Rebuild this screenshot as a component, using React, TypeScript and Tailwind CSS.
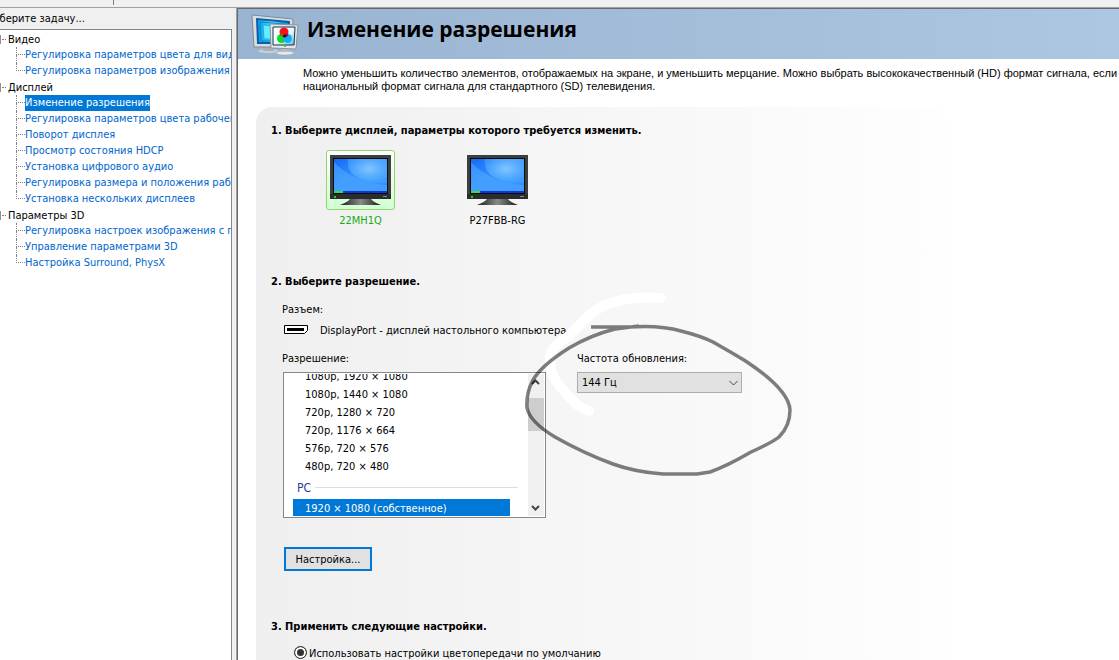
import React, { useState } from 'react';
import clsx from 'clsx';

const treeGroups = [
  {
    title: 'Видео',
    items: ['Регулировка параметров цвета для видео', 'Регулировка параметров изображения для видео'],
  },
  {
    title: 'Дисплей',
    items: [
      'Изменение разрешения',
      'Регулировка параметров цвета рабочего стола',
      'Поворот дисплея',
      'Просмотр состояния HDCP',
      'Установка цифрового аудио',
      'Регулировка размера и положения рабочего стола',
      'Установка нескольких дисплеев',
    ],
  },
  {
    title: 'Параметры 3D',
    items: [
      'Регулировка настроек изображения с просмотром',
      'Управление параметрами 3D',
      'Настройка Surround, PhysX',
    ],
  },
];

const displays = ['22MH1Q', 'P27FBB-RG'];

const hdModes = [
  '1080p, 1920 × 1080',
  '1080p, 1440 × 1080',
  '720p, 1280 × 720',
  '720p, 1176 × 664',
  '576p, 720 × 576',
  '480p, 720 × 480',
];

const pcModes = ['1920 × 1080 (собственное)'];

const HeaderIcon: React.FC = () => (
  <svg width="48" height="42" viewBox="0 0 48 42" aria-hidden="true">
    <defs>
      <linearGradient id="backScreen" x1="0" y1="0" x2="1" y2="0">
        <stop offset="0" stopColor="#0a9be8" />
        <stop offset="0.5" stopColor="#4fe9fb" />
        <stop offset="1" stopColor="#1289dc" />
      </linearGradient>
      <linearGradient id="frontScreen" x1="0" y1="0" x2="1" y2="1">
        <stop offset="0" stopColor="#ffffff" />
        <stop offset="0.55" stopColor="#e3f8ff" />
        <stop offset="1" stopColor="#4cc0ee" />
      </linearGradient>
    </defs>
    <ellipse cx="17" cy="37" rx="10" ry="2" fill="#c9ced3" />
    <path d="M13 32h9l1 5H12z" fill="#a9b0b8" />
    <path d="M1 1 42 5 41 33 3 33z" fill="#d9dde0" stroke="#7f8b97" strokeWidth="1" />
    <path d="M5 4 39 7 38 30 6 30z" fill="#0b5fa8" />
    <path d="M7 6 37 9v19H8z" fill="url(#backScreen)" />
    <path d="M9 8 33 10v17H10z" fill="none" stroke="#0d7fd2" strokeWidth="1" />
    <path d="M12 11 31 12v13H13z" fill="#5fefff" stroke="#20a8ee" strokeWidth="1" />
    <ellipse cx="34" cy="39" rx="9" ry="2" fill="#e6e9eb" stroke="#98a0a8" strokeWidth="0.5" />
    <path d="M31 33h7l1 5h-9z" fill="#b6bcc2" />
    <path d="M19 10 47 11 45 35 20 34z" fill="#e4e7e9" stroke="#8a939c" strokeWidth="1" />
    <path d="M22 13 44 13 43 31 22 31z" fill="url(#frontScreen)" stroke="#18344c" strokeWidth="1" />
    <circle cx="33" cy="18" r="4.5" fill="#fb1018" />
    <circle cx="30.5" cy="24.5" r="4.5" fill="#0fdc1c" />
    <circle cx="36.5" cy="24.5" r="4.5" fill="#17aef2" />
    <path d="M29 20q4-1 5 2l-1 1q-4 0-4-3z" fill="#8a6a08" />
    <path d="M37 20q-4-1-4 2l1 1q4 0 3-3z" fill="#8b1070" />
    <circle cx="33.5" cy="22" r="1.5" fill="#111111" />
    <rect x="33" y="32" width="2" height="1" fill="#22dd22" />
  </svg>
);

const MonitorIcon: React.FC = () => (
  <svg width="61" height="51" viewBox="0 0 61 51" aria-hidden="true">
    <defs>
      <linearGradient id="screen" x1="0" y1="0" x2="1" y2="1">
        <stop offset="0" stopColor="#1668f5" />
        <stop offset="0.4" stopColor="#2f90ff" />
        <stop offset="1" stopColor="#2a8cff" />
      </linearGradient>
      <radialGradient id="glow" cx="0.55" cy="0.4" r="0.6">
        <stop offset="0" stopColor="#86caff" stopOpacity="0.95" />
        <stop offset="1" stopColor="#52abff" stopOpacity="0.5" />
      </radialGradient>
      <linearGradient id="stand" x1="0" y1="0" x2="1" y2="0">
        <stop offset="0" stopColor="#1a1a1a" />
        <stop offset="0.5" stopColor="#8a8a8a" />
        <stop offset="1" stopColor="#1a1a1a" />
      </linearGradient>
    </defs>
    <path d="M20 44h21q2 3 10 6H10q8-3 10-6z" fill="url(#stand)" />
    <rect width="61" height="44" fill="#3c3f3f" />
    <rect x="3" y="3" width="55" height="36" fill="#0b0c0e" />
    <rect x="4" y="4" width="53" height="34" fill="url(#screen)" />
    <path d="M4 7q18 20 53 23v6H4z" fill="#58aeff" fillOpacity="0.5" />
    <path d="M18 4h39v24q-14 2-29-5Q16 16 18 4z" fill="url(#glow)" />
    <rect x="4" y="36" width="53" height="2" fill="#0f35dc" />
    <rect x="4" y="36" width="9" height="2" fill="#3fe03a" />
    <rect y="39" width="61" height="5" fill="#2b2d2d" />
    <rect x="4" y="41" width="2" height="2" fill="#18d424" />
    <rect x="53" y="41" width="4" height="1" fill="#8a8a8a" />
  </svg>
);

const PortIcon: React.FC = () => (
  <svg width="24" height="9" viewBox="0 0 24 9" className="mt-[2px]" aria-hidden="true">
    <path d="M0.5 0.5h23v5l-3 3H0.5z" fill="#ffffff" stroke="#000000" />
    <rect x="3" y="3" width="17" height="3" fill="#000000" />
  </svg>
);

const Chevron: React.FC<{ up?: boolean; bold?: boolean }> = ({ up, bold }) => (
  <svg width="9" height="6" viewBox="0 0 9 6" aria-hidden="true">
    <path
      d={bold ? (up ? 'M1 5 4.5 1.5 8 5' : 'M1 1 4.5 4.5 8 1') : 'M0.5 1 4.5 5l4-4'}
      fill="none"
      stroke="#444444"
      strokeWidth={bold ? 2 : 1}
    />
  </svg>
);

// Hand-drawn marker around the refresh rate
const Marker: React.FC = () => (
  <svg
    width="270"
    height="190"
    viewBox="0 0 270 190"
    className="pointer-events-none absolute top-[183px] left-[267px]"
    aria-hidden="true"
  >
    <path
      d="M138 8C126 7 104 7 85 14S58 35 48 44S26 56 27 71S32 91 42 102S56 118 66 121"
      fill="none"
      stroke="#ffffff"
      strokeWidth="10"
      strokeLinecap="round"
    />
    <path
      d="M68 37H106C134 35 148 38 158 41C170 44 182 48 190 52Q218 68 224 72Q266 100 267 120Q267 136 256 147Q250 152 228 162Q204 176 187 182L174 184H140Q112 182 90 174Q60 163 32 147Q7 132 4 118Q3 104 9 92Q16 77 46 58Q68 45 92 39L116 36"
      fill="none"
      stroke="#000000"
      strokeOpacity="0.5"
      strokeWidth="3.5"
    />
  </svg>
);

const TaskTree: React.FC<{ active: string; onSelect: (name: string) => void }> = ({ active, onSelect }) => (
  <nav className="mr-1 -mb-1 flex-1 overflow-hidden border border-[#828790] bg-white pt-px">
    {treeGroups.map((group) => (
      <div key={group.title}>
        <div className="flex h-4 items-center">
          <span className="ml-[7px] h-[9px] w-[9px] border border-[#919191] bg-white" />
          <span className="mr-[2px] ml-px w-1 border-t border-dotted border-[#808080]" />
          <span className="pt-[2px]">{group.title}</span>
        </div>
        <ul>
          {group.items.map((item, i) => (
            <li key={item} className="flex h-4 pl-[31px]">
              <span className="flex w-[9px] shrink-0 flex-col">
                <span className="h-2 border-b border-l border-dotted border-[#808080]" />
                {i < group.items.length - 1 && (
                  <span className="h-2 border-l border-dotted border-[#808080]" />
                )}
              </span>
              <a
                href="#"
                onClick={() => onSelect(item)}
                className={clsx(
                  'whitespace-nowrap',
                  item === active ? 'bg-[#0078d7] text-white' : 'text-[#0066cc]'
                )}
              >
                {item}
              </a>
            </li>
          ))}
        </ul>
      </div>
    ))}
  </nav>
);

const ResolutionList: React.FC = () => {
  const [selected, setSelected] = useState(pcModes[0]);

  return (
    <div className="mt-[5px] ml-px flex h-[146px] w-[263px] border border-[#828790] bg-white p-px">
      <div
        role="listbox"
        aria-labelledby="resolution-label"
        className="flex flex-1 flex-col justify-end overflow-hidden pr-[18px] pl-2"
      >
        {hdModes.map((mode) => (
          <div
            key={mode}
            role="option"
            aria-selected={mode === selected}
            onClick={() => setSelected(mode)}
            className="h-[18px] shrink-0 pl-3 leading-5"
          >
            {mode}
          </div>
        ))}
        <div className="flex h-6 shrink-0 items-center gap-1 pt-px pl-1 text-[12px] text-[#1f3a9e]">
          PC
          <span className="-mr-2 flex-1 border-t border-[#d5dfe8]" />
        </div>
        {pcModes.map((mode) => (
          <div
            key={mode}
            role="option"
            aria-selected={mode === selected}
            onClick={() => setSelected(mode)}
            className={clsx(
              'h-[17px] shrink-0 pl-3 leading-5',
              mode === selected && 'bg-[#0078d7] text-white'
            )}
          >
            {mode}
          </div>
        ))}
      </div>
      <div className="flex w-4 flex-col bg-[#f0f0f0]">
        <button type="button" aria-label="Вверх" className="flex h-6 items-center justify-center pr-px pb-2">
          <Chevron up bold />
        </button>
        <div className="h-[33px] bg-[#cdcdcd]" />
        <button type="button" aria-label="Вниз" className="mt-auto flex h-[17px] items-center justify-center pr-px">
          <Chevron bold />
        </button>
      </div>
    </div>
  );
};

const App: React.FC = () => {
  const [task, setTask] = useState('Изменение разрешения');
  const [display, setDisplay] = useState(displays[0]);

  return (
    <div className="flex h-screen flex-col overflow-hidden bg-[#f0f0f0] font-['DejaVu_Sans_Condensed','DejaVu_Sans',sans-serif] text-[11px] leading-4 text-black">
      <div className="flex h-[7px] shrink-0">
        <div className="h-[5px] w-[114px] border-r border-[#808080]" />
      </div>

      <div className="flex min-h-0 flex-1 border-t border-[#a0a0a0]">
        {/* Task pane */}
        <aside className="-ml-4 flex w-[252px] shrink-0 flex-col">
          <h2 className="mt-[3px] mb-[2px] ml-px text-[11px]">Выберите задачу...</h2>
          <TaskTree active={task} onSelect={setTask} />
        </aside>

        {/* Settings page */}
        <main className="min-w-0 flex-1 overflow-hidden border-l border-[#a0a0a0]">
          <div className="min-h-full border-t border-l border-[#696969] bg-white">
            <header className="flex h-[50px] bg-linear-to-r from-[#99b4d1] to-[#adc6e2] pt-[5px] pl-[13px]">
              <HeaderIcon />
              <h1 className="ml-2 font-['Open_Sans',sans-serif] text-[21px] leading-[30px] font-bold">{task}</h1>
            </header>

            <p className="mt-2 ml-[65px] font-['Liberation_Sans',Arial,sans-serif] text-[11px] leading-[13px] whitespace-nowrap">
              Можно уменьшить количество элементов, отображаемых на экране, и уменьшить мерцание. Можно выбрать высококачественный (HD) формат сигнала, если
              <br />
              национальный формат сигнала для стандартного (SD) телевидения.
            </p>

            <div className="relative mt-[14px] mr-[172px] ml-[18px] rounded-t-2xl bg-linear-to-r from-[#efefef] to-[#fefefe] pt-4 pb-10 pl-[15px]">
              <section>
                <h3 className="font-bold">1. Выберите дисплей, параметры которого требуется изменить.</h3>
                <div className="mt-[11px] ml-[21px] flex">
                  {displays.map((name) => (
                    <button
                      key={name}
                      type="button"
                      onClick={() => setDisplay(name)}
                      className="flex w-[137px] flex-col items-center"
                    >
                      <span
                        className={clsx(
                          'flex h-[60px] w-[69px] justify-center rounded-[3px] border pt-1',
                          name === display
                            ? 'border-[#8fd673] bg-linear-to-b from-white to-[#d0ffd0]'
                            : 'border-transparent'
                        )}
                      >
                        <MonitorIcon />
                      </span>
                      <span className={clsx('mt-[3px]', name === display && 'text-[#14ac14]')}>{name}</span>
                    </button>
                  ))}
                </div>
              </section>

              <section className="mt-[45px]">
                <h3 className="font-bold">2. Выберите разрешение.</h3>
                <div className="ml-[11px]">
                  <p className="mt-3">Разъем:</p>
                  <p className="mt-[5px] flex items-start gap-3 pl-[2px]">
                    <PortIcon />
                    DisplayPort - дисплей настольного компьютера
                  </p>
                  <div className="mt-3 flex gap-[31px]">
                    <div>
                      <p id="resolution-label">Разрешение:</p>
                      <ResolutionList />
                    </div>
                    <div>
                      <label htmlFor="refresh-rate" className="block">
                        Частота обновления:
                      </label>
                      <div className="mt-[5px] grid w-[165px] items-center">
                        <select
                          id="refresh-rate"
                          className="col-start-1 row-start-1 h-[21px] appearance-none border border-[#adadad] bg-[#e1e1e1] pt-px pl-1"
                        >
                          <option>144 Гц</option>
                          <option>60 Гц</option>
                        </select>
                        <span className="pointer-events-none col-start-1 row-start-1 mr-1 justify-self-end">
                          <Chevron />
                        </span>
                      </div>
                    </div>
                  </div>
                  <button
                    type="button"
                    className="mt-[29px] ml-[2px] block h-6 w-[88px] border-2 border-[#0078d7] bg-[#e1e1e1] pt-px"
                  >
                    Настройка...
                  </button>
                </div>
              </section>

              <section className="mt-12">
                <h3 className="font-bold">3. Применить следующие настройки.</h3>
                <label className="mt-[11px] ml-[23px] flex items-start gap-[2px]">
                  <input
                    type="radio"
                    name="color-mode"
                    defaultChecked
                    className="h-[13px] w-[13px] appearance-none rounded-full border border-[#333333] bg-[#333333] shadow-[inset_0_0_0_2px_#ffffff]"
                  />
                  Использовать настройки цветопередачи по умолчанию
                </label>
              </section>

              <Marker />
            </div>
          </div>
        </main>
      </div>
    </div>
  );
};

export default App;
